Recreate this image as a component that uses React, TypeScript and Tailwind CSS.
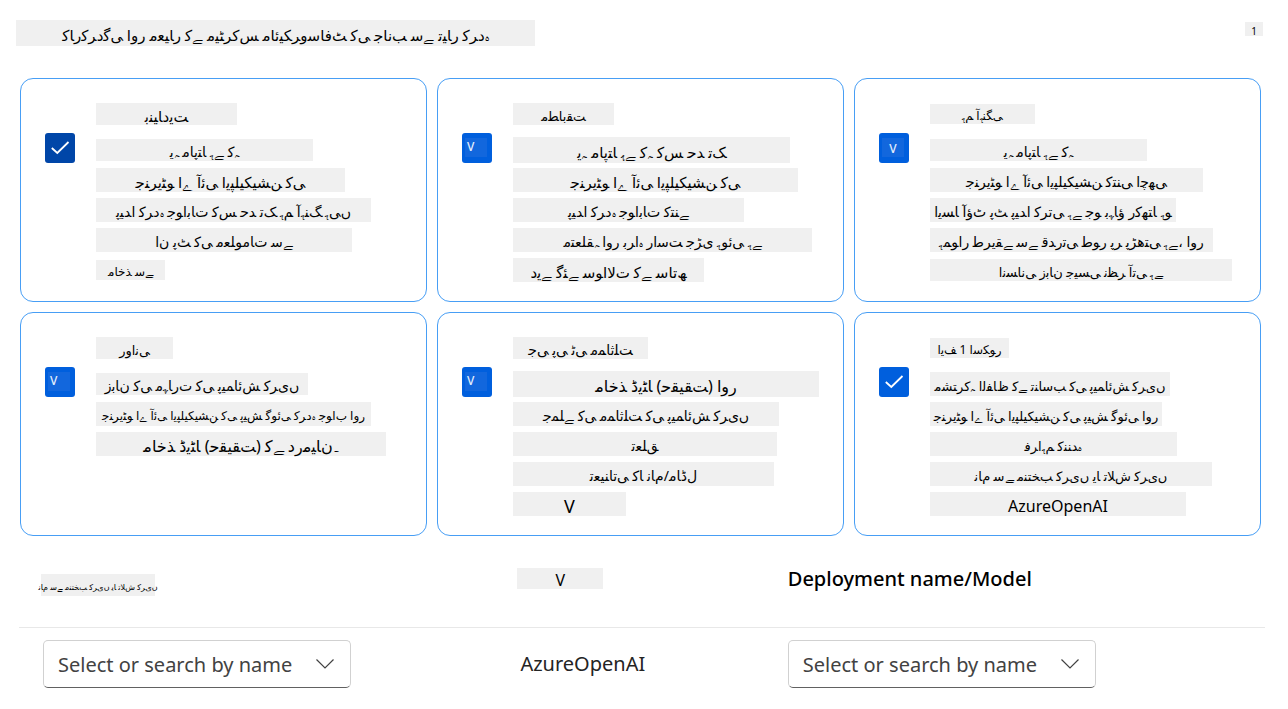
import React from 'react';

type Line = { text: string; w: string; size?: string; h?: string };
type Metric = { id: string; mark: 'check' | 'v-top' | 'v-center'; dark?: boolean; lines: Line[] };

const XS = 'text-[12px]';
const S = 'text-[13px]';
const M = 'text-[14px]';
const L = 'text-[15px]';
const XL = 'text-[16px]';

// First code point of each letter's contextual block: isolated, final, initial, medial.
const dual: Record<string, number> = {
  ئ: 0xfe89, ب: 0xfe8f, پ: 0xfb56, ت: 0xfe95, ٹ: 0xfb66, ث: 0xfe99, ج: 0xfe9d, چ: 0xfb7a,
  ح: 0xfea1, خ: 0xfea5, س: 0xfeb1, ش: 0xfeb5, ط: 0xfec1, ظ: 0xfec5, ع: 0xfec9, ف: 0xfed1,
  ق: 0xfed5, ک: 0xfb8e, گ: 0xfb92, ل: 0xfedd, م: 0xfee1, ن: 0xfee5, ہ: 0xfba6, ھ: 0xfbaa, ی: 0xfbfc,
};
const right: Record<string, number> = {
  ا: 0xfe8d, آ: 0xfe81, ؤ: 0xfe85, د: 0xfea9, ڈ: 0xfb88, ذ: 0xfeab, ر: 0xfead, ز: 0xfeaf,
  ڑ: 0xfb8c, و: 0xfeed, ے: 0xfbae,
};

// Picks each letter's joined form from its place in the word.
function shape(text: string) {
  const chars = Array.from(text);
  let out = '';
  for (let i = 0; i < chars.length; i++) {
    const c = chars[i];
    const prev = i > 0 && chars[i - 1] in dual;
    if (c === 'ل' && chars[i + 1] === 'ا') {
      out += String.fromCharCode(prev ? 0xfefc : 0xfefb);
      i++;
    } else if (c in dual) {
      const next = chars[i + 1] in dual || chars[i + 1] in right;
      out += String.fromCharCode(dual[c] + (prev ? 1 : 0) + (next ? 2 : 0));
    } else if (c in right) {
      out += String.fromCharCode(right[c] + (prev ? 1 : 0));
    } else {
      out += c;
    }
  }
  return out;
}

const metrics: Metric[] = [
  {
    id: 'groundedness',
    mark: 'check',
    dark: true,
    lines: [
      { text: 'بنیادیت', w: 'w-[141px]', size: L },
      { text: 'یہ ماپتا ہے کہ', w: 'w-[217px]', h: 'h-[22px]' },
      { text: 'جنریٹو اے آئی ایپلیکیشن کی', w: 'w-[249px]', size: L },
      { text: 'پیدا کردہ جوابات کس حد تک ہم آہنگ ہیں', w: 'w-[275px]' },
      { text: 'ان پٹ کی معلومات سے', w: 'w-[256px]' },
      { text: 'ماخذ سے', w: 'w-[69px]', size: XS, h: 'h-[20px]' },
    ],
  },
  {
    id: 'relevance',
    mark: 'v-top',
    lines: [
      { text: 'مطابقت', w: 'w-[101px]', size: S },
      { text: 'یہ ماپتا ہے کہ کس حد تک', w: 'w-[277px]', size: L, h: 'h-[26px]' },
      { text: 'جنریٹو اے آئی ایپلیکیشن کی', w: 'w-[285px]', size: L },
      { text: 'پیدا کردہ جوابات کتنے', w: 'w-[231px]' },
      { text: 'متعلقہ اور براہ راست جڑی ہوئی ہے', w: 'w-[299px]' },
      { text: 'دیے گئے سوالات کے ساتھ', w: 'w-[191px]', size: L },
    ],
  },
  {
    id: 'coherence',
    mark: 'v-center',
    lines: [
      { text: 'ہم آہنگی', w: 'w-[105px]', size: XS, h: 'h-[20px]' },
      { text: 'یہ ماپتا ہے کہ', w: 'w-[217px]', h: 'h-[22px]' },
      { text: 'جنریٹو اے آئی ایپلیکیشن کتنی اچھی', w: 'w-[273px]' },
      { text: 'ایسا آؤٹ پٹ پیدا کرتی ہے جو بہاؤ رکھتا ہو', w: 'w-[246px]' },
      { text: 'ہموار طریقے سے قدرتی طور پر پڑھتی ہے، اور', w: 'w-[283px]' },
      { text: 'انسانی زبان جیسی نظر آتی ہے', w: 'w-[302px]', size: S, h: 'h-[22px]' },
    ],
  },
  {
    id: 'fluency',
    mark: 'v-top',
    lines: [
      { text: 'روانی', w: 'w-[77px]', size: S },
      { text: 'زبان کی مہارت کی پیمائش کریں', w: 'w-[212px]', h: 'h-[22px]' },
      { text: 'جنریٹو اے آئی ایپلیکیشن کی پیش گوئی کردہ جواب اور', w: 'w-[275px]', size: XS },
      { text: 'ماخذ ڈیٹا (حقیقت) کے درمیان۔', w: 'w-[290px]', size: XL },
    ],
  },
  {
    id: 'similarity',
    mark: 'v-top',
    lines: [
      { text: 'جی پی ٹی مماثلت', w: 'w-[135px]' },
      { text: 'ماخذ ڈیٹا (حقیقت) اور', w: 'w-[306px]', size: XL, h: 'h-[26px]' },
      { text: 'جملے کی مماثلت کی پیمائش کریں', w: 'w-[266px]' },
      { text: 'تعلق', w: 'w-[264px]' },
      { text: 'تعیناتی کا نام/ماڈل', w: 'w-[261px]' },
      { text: 'V', w: 'w-[113px]', size: 'text-[18px]' },
    ],
  },
  {
    id: 'f1',
    mark: 'check',
    lines: [
      { text: 'ایف 1 اسکور', w: 'w-[79px]', size: XS, h: 'h-[20px]' },
      { text: 'مشترکہ الفاظ کے تناسب کی پیمائش کریں', w: 'w-[240px]', size: S },
      { text: 'جنریٹو اے آئی ایپلیکیشن کی پیش گوئی اور', w: 'w-[232px]', size: S },
      { text: 'فراہم کنندہ', w: 'w-[247px]', size: S },
      { text: 'نام سے منتخب کریں یا تلاش کریں', w: 'w-[282px]', size: S },
      { text: 'AzureOpenAI', w: 'w-[256px]', size: XL },
    ],
  },
];

function Strip({ text, w, size = M, h = 'h-[24px]' }: Line) {
  return (
    <bdo
      dir="ltr"
      lang="ur"
      className={`flex items-center justify-center whitespace-nowrap bg-[#f0f0f0] pt-1 leading-4 text-black ${w} ${size} ${h}`}
    >
      {shape(text)}
    </bdo>
  );
}

function Tick({ mark, dark, id }: { mark: Metric['mark']; dark?: boolean; id: string }) {
  return (
    <span className="relative mt-[31px] size-[30px] shrink-0">
      <input
        id={id}
        type="checkbox"
        defaultChecked
        className={`block size-[30px] appearance-none rounded-[3px] ${dark ? 'bg-[#0046a8]' : 'bg-[#005fdd]'}`}
      />
      {mark === 'check' ? (
        <svg viewBox="0 0 30 30" className="pointer-events-none absolute inset-0 size-[30px]" fill="none" stroke="white" strokeWidth="1.8">
          <path d="M6.8 15 L12.3 20 L23.5 9" />
        </svg>
      ) : (
        <span
          className={`pointer-events-none absolute left-[3px] top-[5px] flex h-[19px] w-[22px] bg-[#1267dd] text-[12px] font-medium leading-[17px] text-[#e4eefc] ${
            mark === 'v-top' ? 'items-start pl-[2px]' : 'items-end justify-center'
          }`}
        >
          V
        </span>
      )}
    </span>
  );
}

function Card({ metric }: { metric: Metric }) {
  const [title, ...rest] = metric.lines;
  return (
    <div className="flex h-[224px] gap-[21px] rounded-[13px] border border-[#479ef5] bg-white pl-6 pt-[23px]">
      <Tick mark={metric.mark} dark={metric.dark} id={metric.id} />
      <label htmlFor={metric.id} className="block min-w-0">
        <span className="mb-[10px] flex h-[23px] items-center">
          <Strip {...title} h={title.h ?? 'h-[22px]'} />
        </span>
        {rest.map((line) => (
          <span key={line.text} className="flex h-[30px] items-center">
            <Strip {...line} />
          </span>
        ))}
      </label>
    </div>
  );
}

function NameSelect({ label }: { label: string }) {
  return (
    <span className="relative block w-[308px]">
      <select
        aria-label={label}
        className="block h-12 w-full appearance-none rounded-[5px] border border-[#d1d1d1] border-b-[#616161] bg-white pl-[14px] pt-[2px] text-[20px] text-[#424242]"
      >
        <option>Select or search by name</option>
      </select>
      <svg viewBox="0 0 20 12" className="pointer-events-none absolute right-4 top-[18px] h-3 w-5" fill="none" stroke="#424242" strokeWidth="1.2">
        <path d="M1.5 1.5 L10 10 L18.5 1.5" />
      </svg>
    </span>
  );
}

export default function App() {
  return (
    <main className="min-h-screen bg-white font-['Noto_Sans','DejaVu_Sans',sans-serif]">
      <header className="flex items-start justify-between pl-4 pr-[25px] pt-5">
        <h1>
          <Strip text="کارکردگی اور معیار کے میٹرکس مائیکروسافٹ کی جانب سے تیار کردہ" w="w-[519px]" size={L} h="h-[26px]" />
        </h1>
        <span className="mt-[2px] flex h-[14px] w-[18px] items-center justify-center bg-[#f0f0f0] pt-1 text-[10px]">1</span>
      </header>

      <section className="mt-8 grid grid-cols-3 gap-[10px] pl-5 pr-[27px]">
        {metrics.map((metric) => (
          <Card key={metric.id} metric={metric} />
        ))}
      </section>

      <div className="pl-[19px] pr-[23px]">
        <table className="w-full table-fixed border-collapse text-left">
          <colgroup>
            <col className="w-[40%]" />
            <col className="w-[21.7%]" />
            <col />
          </colgroup>
          <thead>
            <tr className="h-[91px] border-b border-[#e8e8e8]">
              <th className="pl-[22px] pt-2 font-normal">
                <Strip text="نام سے منتخب کریں یا تلاش کریں" w="w-[114px]" size="text-[8px]" h="h-[22px]" />
              </th>
              <th className="pb-[6px] font-normal">
                <Strip text="V" w="w-[86px]" size={XL} h="h-[21px]" />
              </th>
              <th className="pb-1 text-[20px] font-medium text-black">Deployment name/Model</th>
            </tr>
          </thead>
          <tbody>
            <tr>
              <td className="pl-6 pt-3">
                <NameSelect label="Connection" />
              </td>
              <td className="pl-[3px] pt-3 text-[20px] text-[#242424]">AzureOpenAI</td>
              <td className="pt-3">
                <NameSelect label="Deployment name/Model" />
              </td>
            </tr>
          </tbody>
        </table>
      </div>
    </main>
  );
}
